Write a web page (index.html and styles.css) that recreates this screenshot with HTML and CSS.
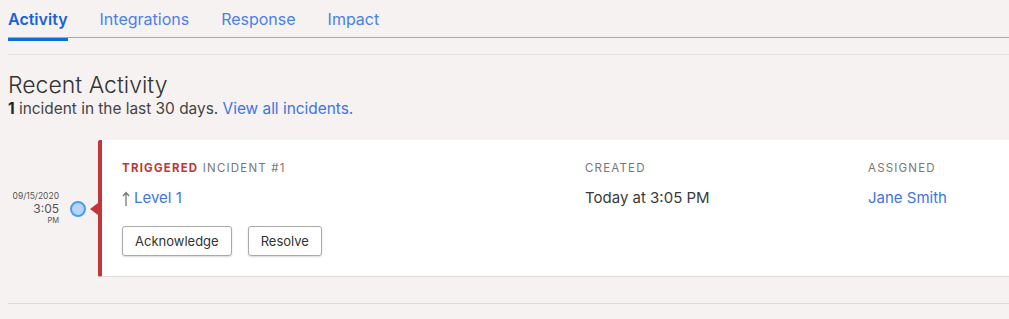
FILE: index.html
```html
<!DOCTYPE html>
<html lang="en">
  <head>
    <meta charset="UTF-8" />
    <meta name="viewport" content="width=device-width, initial-scale=1.0" />
    <title>Service activity</title>
    <link rel="stylesheet" href="styles.css">
  </head>
  <body>
    <!-- Tabs -->
    <nav class="tabs">
      <a href="#" class="tab active">Activity</a>
      <a href="#" class="tab">Integrations</a>
      <a href="#" class="tab">Response</a>
      <a href="#" class="tab">Impact</a>
    </nav>
    <div class="divider"></div>

    <section class="recent">
      <h2>Recent Activity</h2>
      <p class="summary"><b>1</b> incident in the last 30 days. <a href="#">View all incidents.</a></p>

      <div class="entry">
        <div class="when">
          <span class="date">09/15/2020</span>
          <span class="time">3:05</span>
          <span class="ampm">PM</span>
        </div>
        <span class="dot"></span>
        <span class="pointer"></span>

        <div class="card">
          <div class="col col-main">
            <div class="label"><span class="status">Triggered</span> Incident #1</div>
            <div class="value">
              <svg class="arrow" width="8" height="15" viewBox="0 0 8 15">
                <path d="M4 1.5V15M1 5L4 1.5L7 5" fill="none" stroke="#777" stroke-width="1.3"/>
              </svg><a href="#">Level 1</a>
            </div>
            <div class="actions">
              <button>Acknowledge</button>
              <button>Resolve</button>
            </div>
          </div>
          <div class="col">
            <div class="label">Created</div>
            <div class="value">Today at 3:05 PM</div>
          </div>
          <div class="col">
            <div class="label">Assigned</div>
            <div class="value"><a href="#">Jane Smith</a></div>
          </div>
        </div>
      </div>
    </section>
    <div class="divider bottom"></div>
  </body>
</html>
```

FILE: styles.css
```css
/* Общие стили */
body {
  font-family: Inter, "Noto Sans", sans-serif;
  margin: 0;
  padding: 0 0 0 8px;
  background-color: #f6f2f1;
  color: #333;
}

a {
  color: #3d74e6;
  text-decoration: none;
}

/* Табы */
.tabs {
  display: flex;
  gap: 32px;
  border-bottom: 1px solid #a9a9a9;
}

.tab {
  position: relative;
  font-size: 16px;
  line-height: 20px;
  padding: 9px 0 8px;
  color: #4a80e8;
}

.tab.active {
  color: #1663d6;
  font-weight: 600;
}

.tab.active::after {
  content: "";
  position: absolute;
  left: 0;
  right: 0;
  bottom: -4px;
  height: 3px;
  background-color: #0b6fd6;
}

.divider {
  height: 1px;
  background-color: #dfe0e6;
  margin-top: 16px;
}

.divider.bottom {
  background-color: #dcdada;
  margin-top: 26px;
}

/* Секция активности */
.recent h2 {
  font-size: 23px;
  font-weight: 300;
  line-height: 28px;
  margin: 16px 0 0;
  color: #333;
}

.summary {
  font-size: 15.4px;
  line-height: 20px;
  margin: 0 0 21px;
  color: #444;
}

.summary b {
  color: #222;
}

.entry {
  display: flex;
  align-items: center;
}

.when {
  width: 51px;
  display: flex;
  flex-direction: column;
  align-items: flex-end;
  color: #555;
}

.date {
  font-size: 8.5px;
  line-height: 11px;
}

.time {
  font-size: 12px;
  line-height: 14px;
}

.ampm {
  font-size: 7.5px;
  line-height: 10px;
}

.dot {
  width: 12px;
  height: 12px;
  margin-left: 11px;
  border: 2px solid #4b9bf3;
  border-radius: 50%;
  background-color: #b6d5fa;
}

.pointer {
  margin-left: 4px;
  width: 0;
  height: 0;
  border-top: 6px solid transparent;
  border-bottom: 6px solid transparent;
  border-right: 8px solid #c2363a;
}

/* Карточка инцидента */
.card {
  flex: 1;
  display: grid;
  grid-template-columns: 463px 283px 1fr;
  background-color: #fff;
  border-left: 4px solid #c2363a;
  border-bottom: 1px solid #dcdada;
  border-radius: 2px 0 0 2px;
  padding: 20px 0 20px 20px;
}

.label {
  font-size: 11.5px;
  line-height: 16px;
  letter-spacing: 1.2px;
  text-transform: uppercase;
  color: #777;
}

.status {
  color: #c2363a;
  font-weight: 700;
}

.value {
  font-size: 15px;
  line-height: 20px;
  margin-top: 12px;
  color: #3a3a3a;
}

.arrow {
  vertical-align: -3px;
  margin-right: 4px;
}

.actions {
  display: flex;
  gap: 16px;
  margin-top: 18px;
}

.actions button {
  font-family: inherit;
  font-size: 13px;
  color: #333;
  background-color: #fff;
  border: 1px solid #aaa;
  border-radius: 3px;
  box-shadow: 0 1px 2px rgba(0, 0, 0, 0.15);
  height: 30px;
  padding: 0 12px;
}
```
